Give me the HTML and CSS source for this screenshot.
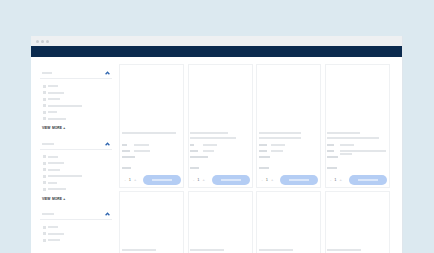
FILE: index.html
```html
<!DOCTYPE html>
<html>
<head>
<meta charset="utf-8">
<link rel="stylesheet" href="styles.css">
</head>
<body>
<div class="window">
  <div class="titlebar"><span class="dot"></span><span class="dot"></span><span class="dot"></span></div>
  <div class="navbar"></div>
  <div class="content">
    <aside class="sidebar">
      <section class="filter">
        <div class="filter-head"><span class="bar w10"></span><svg class="chev" width="5" height="4" viewBox="0 0 5 4"><polyline points="0.6,3.2 2.5,1.2 4.4,3.2" fill="none" stroke="#2f66b0" stroke-width="1.3"/></svg></div>
        <ul class="opts">
          <li><i></i><span class="bar w10"></span></li>
          <li><i></i><span class="bar w16"></span></li>
          <li><i></i><span class="bar w12"></span></li>
          <li><i></i><span class="bar w34"></span></li>
          <li><i></i><span class="bar w9"></span></li>
          <li><i></i><span class="bar w18"></span></li>
        </ul>
        <div class="more">VIEW MORE +</div>
      </section>
      <section class="filter">
        <div class="filter-head"><span class="bar w12"></span><svg class="chev" width="5" height="4" viewBox="0 0 5 4"><polyline points="0.6,3.2 2.5,1.2 4.4,3.2" fill="none" stroke="#2f66b0" stroke-width="1.3"/></svg></div>
        <ul class="opts">
          <li><i></i><span class="bar w10"></span></li>
          <li><i></i><span class="bar w16"></span></li>
          <li><i></i><span class="bar w12"></span></li>
          <li><i></i><span class="bar w34"></span></li>
          <li><i></i><span class="bar w9"></span></li>
          <li><i></i><span class="bar w18"></span></li>
        </ul>
        <div class="more">VIEW MORE +</div>
      </section>
      <section class="filter">
        <div class="filter-head"><span class="bar w12"></span><svg class="chev" width="5" height="4" viewBox="0 0 5 4"><polyline points="0.6,3.2 2.5,1.2 4.4,3.2" fill="none" stroke="#2f66b0" stroke-width="1.3"/></svg></div>
        <ul class="opts">
          <li><i></i><span class="bar w10"></span></li>
          <li><i></i><span class="bar w16"></span></li>
          <li><i></i><span class="bar w12"></span></li>
        </ul>
      </section>
    </aside>
    <main class="grid">
      <div class="card">
        <div class="img"></div>
        <div class="title"><span class="bar w54"></span></div>
        <div class="meta"><span class="lab"><span class="bar dk w5"></span></span><span class="bar w15"></span></div>
        <div class="meta"><span class="lab"><span class="bar dk w8"></span></span><span class="bar w16"></span></div>
        <div class="line"><span class="bar dk w13"></span></div>
        <div class="price"><span class="bar dk w9"></span></div>
        <div class="buy"><span class="qty"><span class="pm">-</span><span class="num">1</span><span class="pm">+</span></span><span class="btn"><span></span></span></div>
      </div>
      <div class="card">
        <div class="img"></div>
        <div class="title"><span class="bar w38"></span><span class="bar w46"></span></div>
        <div class="meta"><span class="lab"><span class="bar dk w4"></span></span><span class="bar w14"></span></div>
        <div class="meta"><span class="lab"><span class="bar dk w8"></span></span><span class="bar w11"></span></div>
        <div class="line"><span class="bar dk w18"></span></div>
        <div class="price"><span class="bar dk w9"></span></div>
        <div class="buy"><span class="qty"><span class="pm">-</span><span class="num">1</span><span class="pm">+</span></span><span class="btn"><span></span></span></div>
      </div>
      <div class="card">
        <div class="img"></div>
        <div class="title"><span class="bar w42"></span><span class="bar w42"></span></div>
        <div class="meta"><span class="lab"><span class="bar dk w8"></span></span><span class="bar w14"></span></div>
        <div class="meta"><span class="lab"><span class="bar dk w8"></span></span><span class="bar w12"></span></div>
        <div class="line"><span class="bar dk w11"></span></div>
        <div class="price"><span class="bar dk w10"></span></div>
        <div class="buy"><span class="qty"><span class="pm">-</span><span class="num">1</span><span class="pm">+</span></span><span class="btn"><span></span></span></div>
      </div>
      <div class="card">
        <div class="img"></div>
        <div class="title"><span class="bar w33"></span><span class="bar w52"></span></div>
        <div class="meta"><span class="lab"><span class="bar dk w7"></span></span><span class="bar w14"></span></div>
        <div class="meta tall"><span class="lab"><span class="bar dk w7"></span></span><span class="vals"><span class="bar w46"></span><span class="bar w12"></span></span></div>
        <div class="line"><span class="bar dk w11"></span></div>
        <div class="price"><span class="bar dk w10"></span></div>
        <div class="buy"><span class="qty"><span class="pm">-</span><span class="num">1</span><span class="pm">+</span></span><span class="btn"><span></span></span></div>
      </div>
      <div class="card short"><div class="img"></div><div class="title"><span class="bar w34"></span></div></div>
      <div class="card short"><div class="img"></div><div class="title"><span class="bar w34"></span></div></div>
      <div class="card short"><div class="img"></div><div class="title"><span class="bar w34"></span></div></div>
      <div class="card short"><div class="img"></div><div class="title"><span class="bar w34"></span></div></div>
    </main>
  </div>
</div>
</body>
</html>
```
FILE: styles.css
```css
html, body { margin: 0; padding: 0; }
body {
  background: #dce9f0;
  width: 434px;
  height: 253px;
  overflow: hidden;
  font-family: "Liberation Sans", Arial, sans-serif;
}
.window {
  margin: 36px 0 0 31px;
  width: 372px;
  height: 260px;
  background: #ffffff;
  border-right: 1px solid #dfe6ec;
  box-sizing: border-box;
}
.titlebar {
  height: 10px;
  background: #eef0f2;
  display: flex;
  align-items: center;
  gap: 2px;
  padding-left: 5px;
}
.dot { width: 3px; height: 3px; border-radius: 50%; background: #c9cdd2; }
.navbar { height: 11px; background: #0b2a4e; }
.content {
  display: flex;
  gap: 7px;
  padding: 7px 0 0 9px;
}
.sidebar { width: 72px; padding-top: 6px; flex: none; }
.filter + .filter { margin-top: 10.5px; }
.filter-head {
  height: 6px;
  padding: 0 2px 2px 2px;
  display: flex;
  align-items: center;
  justify-content: space-between;
  border-bottom: 1px solid #eceef1;
}
.chev { display: block; }
.bar { display: block; height: 2px; background: #e3e6e9; flex: none; }
.bar.dk { background: #d9dde1; }
.opts { list-style: none; margin: 0; padding: 4px 0 0 3px; }
.opts li { height: 6.5px; display: flex; align-items: center; gap: 2px; }
.opts i { display: block; width: 3px; height: 3px; background: #e0e3e6; }
.more {
  margin-top: 4px;
  padding-left: 2px;
  height: 4px;
  line-height: 4px;
  font-size: 3.3px;
  font-weight: 700;
  word-spacing: 0.6px;
  white-space: pre;
  color: #2a2f36;
}
.grid {
  display: grid;
  grid-template-columns: repeat(4, 65px);
  column-gap: 3.5px;
  row-gap: 3px;
  align-content: start;
}
.card {
  height: 124px;
  border: 1px solid #eff1f3;
  box-sizing: border-box;
  padding: 0 2px 0 1.5px;
}
.card .img { height: 67px; }
.card.short .img { height: 57px; }
.title { height: 10.5px; display: flex; flex-direction: column; gap: 2.5px; }
.meta { height: 5.5px; display: flex; align-items: center; }
.meta.tall { align-items: flex-start; padding-top: 1.5px; box-sizing: border-box; }
.vals { display: flex; flex-direction: column; gap: 1px; }
.lab { width: 12.5px; flex: none; }
.line { height: 5px; display: flex; align-items: center; margin-top: 0.5px; }
.price { height: 7px; margin-top: 5.5px; display: flex; align-items: center; }
.buy {
  margin-top: 3.5px;
  height: 10px;
  display: flex;
  align-items: center;
  justify-content: space-between;
}
.qty {
  display: flex;
  align-items: center;
  gap: 3px;
  padding-left: 3px;
  font-size: 4px;
  line-height: 4px;
}
.pm { color: #b9bec4; }
.num { color: #6a7078; }
.btn {
  width: 38px;
  height: 10px;
  border-radius: 5px;
  background: #b4cdf4;
  display: flex;
  align-items: center;
  justify-content: center;
}
.btn span { display: block; width: 20px; height: 2px; background: #dbe7fa; }
.w4 { width: 4px; } .w5 { width: 5px; } .w7 { width: 7px; } .w8 { width: 8px; } .w9 { width: 9px; }
.w10 { width: 10px; } .w11 { width: 11px; } .w12 { width: 12px; } .w13 { width: 13px; }
.w14 { width: 14px; } .w15 { width: 15px; } .w16 { width: 16px; } .w18 { width: 18px; }
.w33 { width: 33px; } .w34 { width: 34px; } .w38 { width: 38px; } .w42 { width: 42px; }
.w46 { width: 46px; } .w52 { width: 52px; } .w54 { width: 54px; }
```
